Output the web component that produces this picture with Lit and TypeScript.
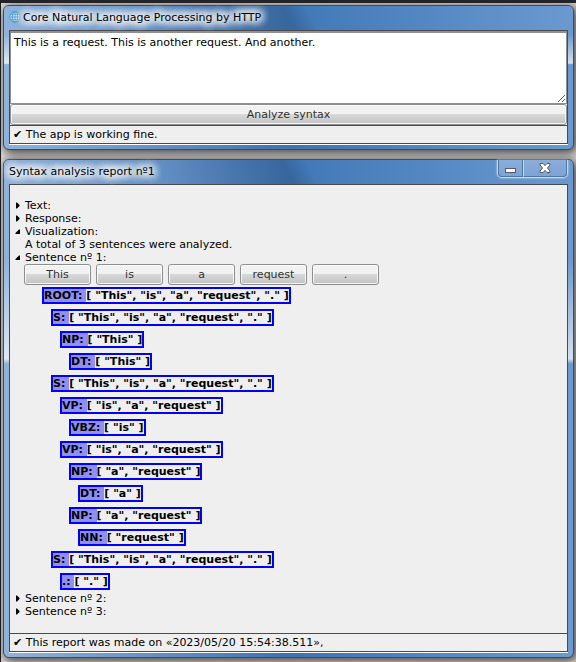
import { LitElement, html, svg, css } from "lit";
import { customElement } from "lit/decorators.js";
import { styleMap } from "lit/directives/style-map.js";

const ALL = ["This", "is", "a", "request", "."];
const NODES: Array<[number, string, string[]]> = [
  [0, "ROOT", ALL],
  [1, "S", ALL],
  [2, "NP", ["This"]],
  [3, "DT", ["This"]],
  [1, "S", ALL],
  [2, "VP", ["is", "a", "request"]],
  [3, "VBZ", ["is"]],
  [2, "VP", ["is", "a", "request"]],
  [3, "NP", ["a", "request"]],
  [4, "DT", ["a"]],
  [3, "NP", ["a", "request"]],
  [4, "NN", ["request"]],
  [1, "S", ALL],
  [2, ".", ["."]],
];

const marker = svg`
  <path class="closed" d="M1 1.5H2L4.5 4V5L2 7.5H1Z"/>
  <path class="opened" d="M5 2.5V7H0.5V6L4 2.5Z"/>`;

@customElement("app-root")
export class AppRoot extends LitElement {
  static styles = css`
    :host {
      display: block;
      box-sizing: border-box;
      min-height: 100vh;
      padding: 2px 2px 4px;
      border-top: 3px solid #242428;
      border-left: 1px solid #1c1a1c;
      background: #dcdad8;
      font: 11px/13px "DejaVu Sans", sans-serif;
      color: #000;
      overflow: hidden;
    }
    * { box-sizing: border-box; }
    .window {
      margin: 0 0 9px;
      padding: 0 5px 5px;
      border: 1px solid #4b4b4f;
      border-radius: 6px;
      box-shadow: 2px 2px 10px 1px rgba(0, 0, 0, 0.7);
      background:
        linear-gradient(transparent 20%, #ffffffb3 40%, transparent 41%),
        linear-gradient(to right, #ffffff66, #0000001a, #ffffff33),
        #4580c4;
    }
    .title {
      display: flex;
      align-items: center;
      justify-content: space-between;
      height: 24px;
      margin: 0 -5px;
      padding: 0 5px;
      border-radius: 5px 5px 0 0;
      background:
        linear-gradient(60deg, transparent 25%, #00000024 50%, transparent 54%),
        linear-gradient(to right, #ffffff66, #00000012 50%, #ffffff33),
        #4580c4;
    }
    h1 {
      display: flex;
      align-items: center;
      gap: 2px;
      margin: 0;
      padding-bottom: 2px;
      font: inherit;
      text-shadow: 0 0 10px #fff, 0 0 10px #fff, 0 0 10px #fff, 0 0 10px #fff,
        0 0 10px #fff, 0 0 10px #fff, 0 0 10px #fff, 0 0 10px #fff;
    }
    .controls {
      display: flex;
      align-self: flex-start;
      height: 18px;
      border: 1px solid #c3d8f0;
      border-top: 0;
      border-radius: 0 0 5px 5px;
      box-shadow: 0 0 2px #dceaff;
    }
    .controls button {
      display: grid;
      place-items: center;
      padding: 0;
      border: 1px solid #54779f;
      border-top: 0;
      background: linear-gradient(#8badd9, #7ca4d6);
      width: 25px;
    }
    .controls .min { border-radius: 0 0 0 4px; padding-top: 4px; }
    .controls .close { width: 44px; border-left: 1px solid #c3d8f0; border-radius: 0 0 4px 0; }
    .body {
      border: 1px solid #4b4b4f;
      background: #efefef;
      box-shadow: 0 1px 0 #fff;
    }
    textarea {
      display: block;
      width: 100%;
      height: 73px;
      margin: 0;
      padding: 3px;
      border: 1px solid #8e8f8f;
      border-width: 2px 1px 1px;
      border-style: double solid solid;
      background: #fff;
      font: inherit;
      color: #000;
      resize: vertical;
      outline: none;
    }
    .push {
      height: 21px;
      padding: 0 0 1px;
      border: 1px solid #8e8f8f;
      border-radius: 3px;
      background: linear-gradient(#f2f2f2 45%, #dadada 45%, #c3c3c3);
      box-shadow: inset 0 0 0 1px #fffc;
      font: inherit;
      color: #333;
    }
    .wide { display: block; width: 100%; }
    .status {
      padding: 2px 3px;
      border-top: 1px solid #4b4b4f;
      min-height: 18px;
    }
    .report { padding: 14px 5px 15px; }
    .line { display: flex; align-items: center; gap: 4px; }
    .line svg { width: 6px; height: 9px; flex: none; }
    .opened, .closed { display: none; }
    details > summary .closed, details[open] > summary .opened { display: inline; }
    details[open] > summary .closed { display: none; }
    summary { list-style: none; cursor: pointer; }
    summary::-webkit-details-marker { display: none; }
    .inner { padding-left: 10px; }
    p { margin: 0; }
    .tokens { display: flex; gap: 5px; padding-left: 9px; }
    .tokens .push { width: 67px; }
    .tree {
      margin: 0;
      padding: 2px 0 2px 27px;
      list-style: none;
      font-weight: bold;
    }
    .tree li { display: flex; padding-bottom: 5px; }
    .tree li:last-child { padding-bottom: 0; }
    .node { border: 2px solid #00f; display: flex; white-space: pre; }
    .tag { background: #8f8ff5; }
  `;

  summary(text: string) {
    return html`<summary class="line"><svg viewBox="0 0 6 9" aria-hidden="true">${marker}</svg>${text}</summary>`;
  }

  render() {
    return html`
      <section class="window">
        <header class="title">
          <h1>
            <svg width="12" height="12" viewBox="0 0 12 12" fill="none" stroke="#4a98cc" aria-hidden="true">
              <circle cx="6" cy="6" r="5.2" fill="#d3e7f5"/>
              <ellipse cx="6" cy="6" rx="2.6" ry="5.2"/>
              <path d="M6 1V11M1 6H11M2 3.3H10M2 8.7H10" stroke-width=".8"/>
            </svg>
            Core Natural Language Processing by HTTP
          </h1>
        </header>
        <div class="body">
          <textarea aria-label="Text to analyze" .value=${"This is a request. This is another request. And another."}></textarea>
          <button class="push wide">Analyze syntax</button>
          <div class="status">✔ The app is working fine.</div>
        </div>
      </section>
      <section class="window">
        <header class="title">
          <h1>Syntax analysis report nº1</h1>
          <div class="controls">
            <button class="min" aria-label="Minimize">
              <svg width="11" height="6" viewBox="0 0 11 6"><rect x=".5" y="1.5" width="10" height="4" fill="#fff" stroke="#555a6b"/></svg>
            </button>
            <button class="close" aria-label="Close">
              <svg width="12" height="10" viewBox="0 0 12 10"><path d="M1 .5H4.2L6 2.6 7.8.5H11V2L8.4 5 11 8V9.5H7.8L6 7.4 4.2 9.5H1V8L3.6 5 1 2Z" fill="#fff" stroke="#555a6b"/></svg>
            </button>
          </div>
        </header>
        <div class="body">
          <div class="report">
            <details>${this.summary("Text:")}</details>
            <details>${this.summary("Response:")}</details>
            <details open>
              ${this.summary("Visualization:")}
              <p class="inner">A total of 3 sentences were analyzed.</p>
            </details>
            <details open>
              ${this.summary("Sentence nº 1:")}
              <div class="tokens">${ALL.map((t) => html`<button class="push">${t}</button>`)}</div>
              <ul class="tree">
                ${NODES.map(([depth, tag, words]) => html`
                  <li style=${styleMap({ marginLeft: `${depth * 9}px` })}>
                    <div class="node"><span class="tag">${tag}: </span><span>[ ${words.map((w) => `"${w}"`).join(", ")} ]</span></div>
                  </li>`)}
              </ul>
            </details>
            <details>${this.summary("Sentence nº 2:")}</details>
            <details>${this.summary("Sentence nº 3:")}</details>
          </div>
          <div class="status">✔ This report was made on «2023/05/20 15:54:38.511»,</div>
        </div>
      </section>
    `;
  }
}
